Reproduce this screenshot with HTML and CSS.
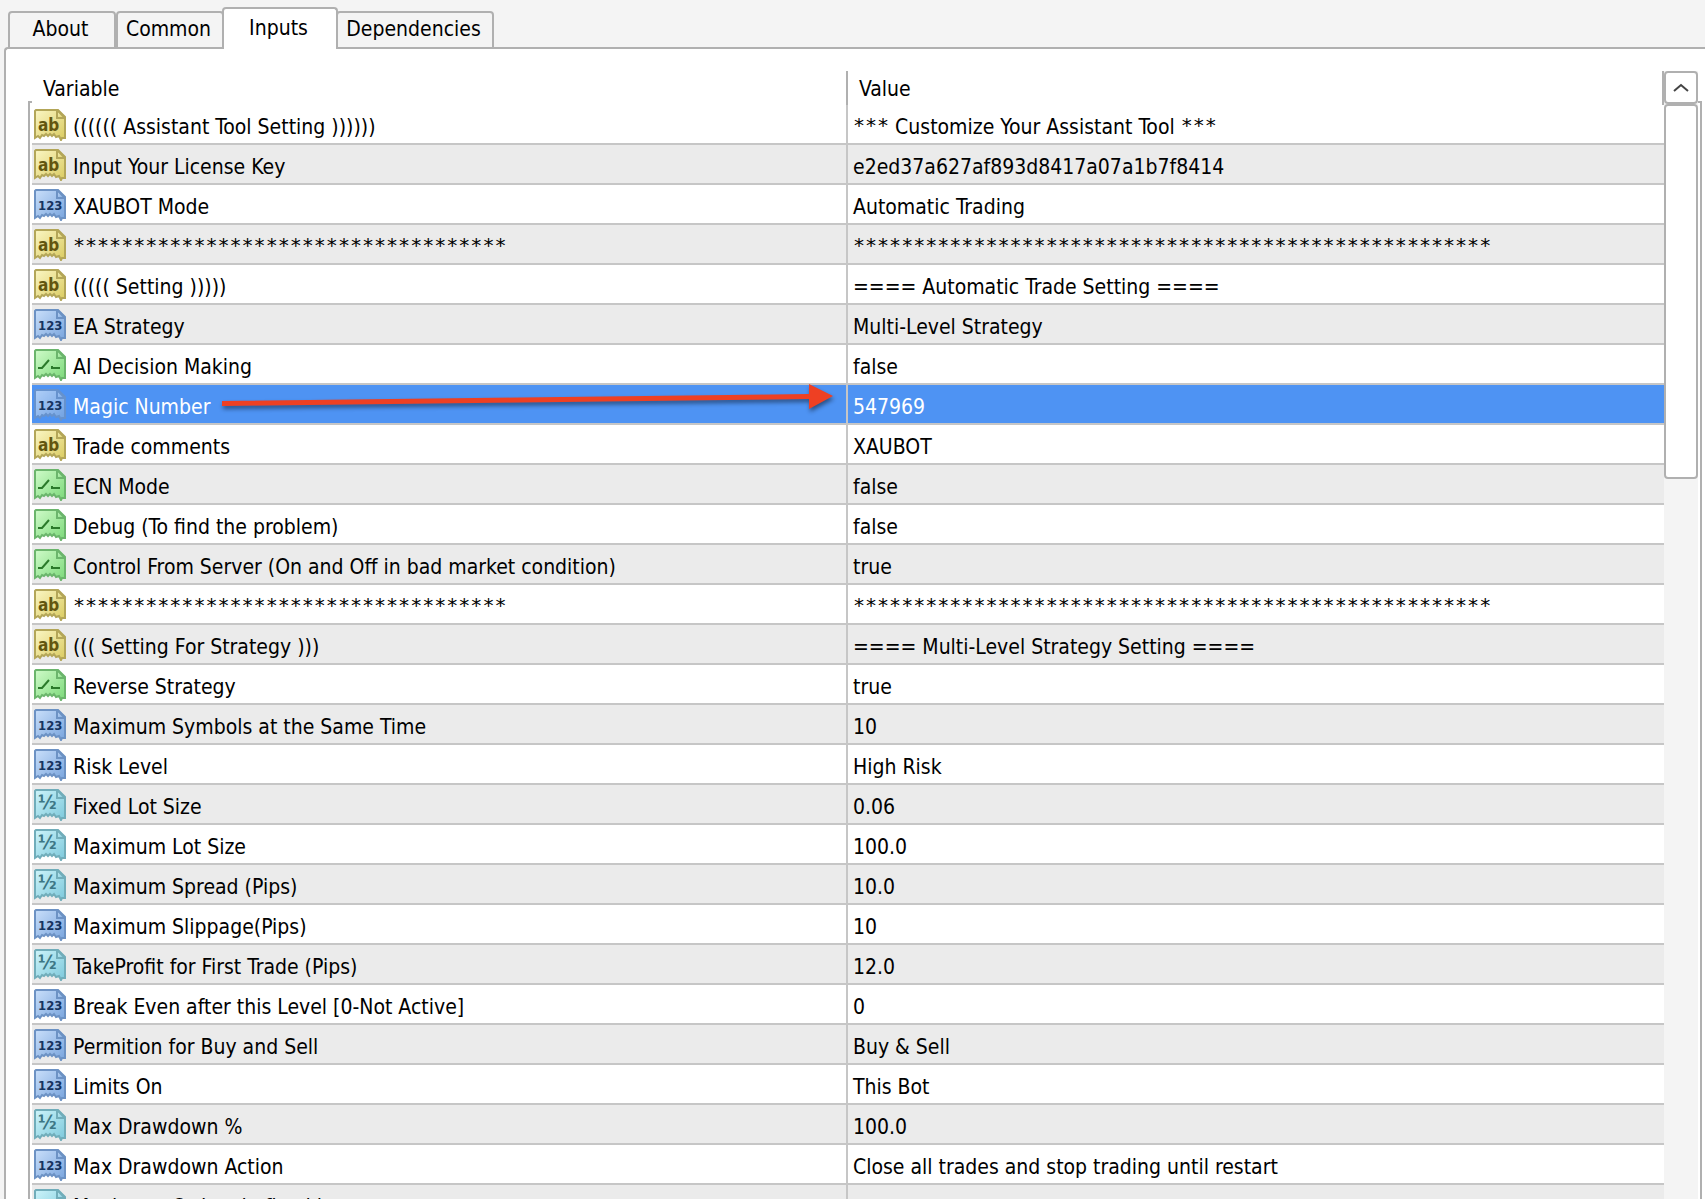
FILE: index.html
```
<!DOCTYPE html>
<html lang="en">
<head>
<meta charset="utf-8">
<title>Expert inputs</title>
<link rel="stylesheet" href="styles.css">
</head>
<body>
<svg class="sprite" aria-hidden="true">
  <defs>
    <linearGradient id="g-string" x1="0" y1="0" x2="1" y2="1"><stop offset="0" stop-color="#fbf6c4"/><stop offset="1" stop-color="#dacb60"/></linearGradient>
    <linearGradient id="g-int" x1="0" y1="0" x2="1" y2="1"><stop offset="0" stop-color="#c9dffa"/><stop offset="1" stop-color="#78a4dd"/></linearGradient>
    <linearGradient id="g-bool" x1="0" y1="0" x2="1" y2="1"><stop offset="0" stop-color="#cffbc9"/><stop offset="1" stop-color="#7cd97a"/></linearGradient>
    <linearGradient id="g-real" x1="0" y1="0" x2="1" y2="1"><stop offset="0" stop-color="#cdf4fa"/><stop offset="1" stop-color="#7cc8db"/></linearGradient>
    <path id="page" d="M2 1H24L31 8V29L28 29L27 31L25 27L22 28L20 25L18 27L16 25L14 27L12 25L10 27L8 26L6 29L4 27L1 29V2Z"/>
    <path id="fold" d="M23 1V9H31Z"/>
  </defs>
  <symbol id="i-string" viewBox="0 0 32 32">
    <g fill="url(#g-string)" stroke="#b3a658" stroke-width="2"><use href="#page"/><use href="#fold"/></g>
  </symbol>
  <symbol id="i-int" viewBox="0 0 32 32">
    <g fill="url(#g-int)" stroke="#6c92c4" stroke-width="2"><use href="#page"/><use href="#fold"/></g>
  </symbol>
  <symbol id="i-bool" viewBox="0 0 32 32">
    <g fill="url(#g-bool)" stroke="#6bb56c" stroke-width="2"><use href="#page"/><use href="#fold"/></g>
    <path d="M4 19H8L15 11M18 17V19H26" fill="none" stroke="#2b7a2b" stroke-width="2"/>
  </symbol>
  <symbol id="i-real" viewBox="0 0 32 32">
    <g fill="url(#g-real)" stroke="#71adba" stroke-width="2"><use href="#page"/><use href="#fold"/></g>
  </symbol>
</svg>

<div class="tabs" role="tablist">
  <button class="tab" role="tab">About</button>
  <button class="tab" role="tab">Common</button>
  <button class="tab tab-active" role="tab" aria-selected="true">Inputs</button>
  <button class="tab tab-wide" role="tab">Dependencies</button>
</div>

<main class="panel">
  <div class="list">
    <table class="inputs">
      <thead>
        <tr><th scope="col">Variable</th><th scope="col">Value</th></tr>
      </thead>
      <tbody>
        <tr><td><div class="name"><span class="icon string"><svg><use href="#i-string"/></svg><b>ab</b></span>(((((( Assistant Tool Setting ))))))</div></td><td><span class="stars">***</span> Customize Your Assistant Tool <span class="stars">***</span></td></tr>
        <tr><td><div class="name"><span class="icon string"><svg><use href="#i-string"/></svg><b>ab</b></span>Input Your License Key</div></td><td>e2ed37a627af893d8417a07a1b7f8414</td></tr>
        <tr><td><div class="name"><span class="icon int"><svg><use href="#i-int"/></svg><b>123</b></span>XAUBOT Mode</div></td><td>Automatic Trading</td></tr>
        <tr><td><div class="name"><span class="icon string"><svg><use href="#i-string"/></svg><b>ab</b></span><span class="stars">************************************</span></div></td><td><span class="stars">*****************************************************</span></td></tr>
        <tr><td><div class="name"><span class="icon string"><svg><use href="#i-string"/></svg><b>ab</b></span>((((( Setting )))))</div></td><td>==== Automatic Trade Setting ====</td></tr>
        <tr><td><div class="name"><span class="icon int"><svg><use href="#i-int"/></svg><b>123</b></span>EA Strategy</div></td><td>Multi-Level Strategy</td></tr>
        <tr><td><div class="name"><span class="icon"><svg><use href="#i-bool"/></svg></span>AI Decision Making</div></td><td>false</td></tr>
        <tr class="selected"><td><div class="name"><span class="icon int"><svg><use href="#i-int"/></svg><b>123</b></span>Magic Number</div><svg class="arrow" viewBox="0 0 612 30" aria-hidden="true"><path d="M0 16L587 9V-1L611 11L587 24V14L0 21Z"/></svg></td><td>547969</td></tr>
        <tr><td><div class="name"><span class="icon string"><svg><use href="#i-string"/></svg><b>ab</b></span>Trade comments</div></td><td>XAUBOT</td></tr>
        <tr><td><div class="name"><span class="icon"><svg><use href="#i-bool"/></svg></span>ECN Mode</div></td><td>false</td></tr>
        <tr><td><div class="name"><span class="icon"><svg><use href="#i-bool"/></svg></span>Debug (To find the problem)</div></td><td>false</td></tr>
        <tr><td><div class="name"><span class="icon"><svg><use href="#i-bool"/></svg></span>Control From Server (On and Off in bad market condition)</div></td><td>true</td></tr>
        <tr><td><div class="name"><span class="icon string"><svg><use href="#i-string"/></svg><b>ab</b></span><span class="stars">************************************</span></div></td><td><span class="stars">*****************************************************</span></td></tr>
        <tr><td><div class="name"><span class="icon string"><svg><use href="#i-string"/></svg><b>ab</b></span>((( Setting For Strategy )))</div></td><td>==== Multi-Level Strategy Setting ====</td></tr>
        <tr><td><div class="name"><span class="icon"><svg><use href="#i-bool"/></svg></span>Reverse Strategy</div></td><td>true</td></tr>
        <tr><td><div class="name"><span class="icon int"><svg><use href="#i-int"/></svg><b>123</b></span>Maximum Symbols at the Same Time</div></td><td>10</td></tr>
        <tr><td><div class="name"><span class="icon int"><svg><use href="#i-int"/></svg><b>123</b></span>Risk Level</div></td><td>High Risk</td></tr>
        <tr><td><div class="name"><span class="icon real"><svg><use href="#i-real"/></svg><b>½</b></span>Fixed Lot Size</div></td><td>0.06</td></tr>
        <tr><td><div class="name"><span class="icon real"><svg><use href="#i-real"/></svg><b>½</b></span>Maximum Lot Size</div></td><td>100.0</td></tr>
        <tr><td><div class="name"><span class="icon real"><svg><use href="#i-real"/></svg><b>½</b></span>Maximum Spread (Pips)</div></td><td>10.0</td></tr>
        <tr><td><div class="name"><span class="icon int"><svg><use href="#i-int"/></svg><b>123</b></span>Maximum Slippage(Pips)</div></td><td>10</td></tr>
        <tr><td><div class="name"><span class="icon real"><svg><use href="#i-real"/></svg><b>½</b></span>TakeProfit for First Trade (Pips)</div></td><td>12.0</td></tr>
        <tr><td><div class="name"><span class="icon int"><svg><use href="#i-int"/></svg><b>123</b></span>Break Even after this Level [0-Not Active]</div></td><td>0</td></tr>
        <tr><td><div class="name"><span class="icon int"><svg><use href="#i-int"/></svg><b>123</b></span>Permition for Buy and Sell</div></td><td>Buy &amp; Sell</td></tr>
        <tr><td><div class="name"><span class="icon int"><svg><use href="#i-int"/></svg><b>123</b></span>Limits On</div></td><td>This Bot</td></tr>
        <tr><td><div class="name"><span class="icon real"><svg><use href="#i-real"/></svg><b>½</b></span>Max Drawdown %</div></td><td>100.0</td></tr>
        <tr><td><div class="name"><span class="icon int"><svg><use href="#i-int"/></svg><b>123</b></span>Max Drawdown Action</div></td><td>Close all trades and stop trading until restart</td></tr>
        <tr><td><div class="name"><span class="icon real"><svg><use href="#i-real"/></svg></span>Maximum Orders in fixed lots</div></td><td></td></tr>
      </tbody>
    </table>
    <div class="scrollbar">
      <button class="scroll-up" aria-label="Scroll up"><svg viewBox="0 0 18 10"><path d="M2 8L9 2L16 8"/></svg></button>
      <div class="thumb"></div>
    </div>
  </div>
</main>
</body>
</html>
```
FILE: styles.css
```
* { box-sizing: border-box; }

body {
  display: flex;
  flex-direction: column;
  height: 100vh;
  margin: 0;
  overflow: hidden;
  background: #f4f4f4;
  color: #000;
  font: 21px/32px "DejaVu Sans Condensed", "DejaVu Sans", sans-serif;
}

button {
  padding: 0;
  color: inherit;
  font: inherit;
}

.sprite {
  position: absolute;
  width: 0;
  height: 0;
}

/* Tabs */
.tabs {
  display: flex;
  flex: none;
  align-items: flex-end;
  padding: 7px 0 0 8px;
}

.tab {
  width: 108px;
  height: 38px;
  margin-bottom: -2px;
  padding: 0 3px 2px 0;
  border: 2px solid #b0b0b0;
  border-radius: 4px 4px 0 0;
  background: #f4f4f4;
}

.tab-active {
  z-index: 1;
  width: 116px;
  height: 42px;
  margin-left: -2px;
  border-bottom: 0;
  background: #fff;
}

.tab-wide {
  width: 158px;
  margin-left: -2px;
}

/* Panel */
.panel {
  flex: 1;
  min-height: 0;
  margin-left: 4px;
  padding: 22px 3px 0 22px;
  border: 2px solid #b0b0b0;
  border-width: 2px 0 0 2px;
  border-radius: 4px 0 0 0;
  background: #fff;
}

.list {
  position: relative;
  display: grid;
  grid-template-columns: 1fr 34px;
  padding: 0 4px;
}

/* Frame line that runs behind the header row */
.list::before {
  content: "";
  position: absolute;
  inset: 30px 0 0;
  border: 2px solid #b0b0b0;
}

.inputs {
  position: relative;
  width: 100%;
  border-collapse: separate;
  border-spacing: 0;
  table-layout: fixed;
  background: #fff;
}

.inputs th {
  height: 34px;
  padding: 2px 11px 0;
  border-right: 2px solid #b0b0b0;
  font-weight: normal;
  text-align: left;
}

.inputs td {
  height: 40px;
  padding: 6px 0 0 5px;
  border-bottom: 2px solid #c6c6c6;
  white-space: nowrap;
}

.inputs td:first-child {
  position: relative;
  padding-left: 2px;
  border-right: 2px solid #c6c6c6;
}

.inputs tbody tr:nth-child(even) {
  background: #ebebeb;
}

.inputs tbody tr.selected {
  background: #4e93f3;
  color: #fff;
}

.name {
  display: flex;
  gap: 7px;
  height: 32px;
}

/* Type icon: torn page with its caption stacked on it */
.icon {
  display: grid;
  flex: none;
  grid-template: 32px / 32px;
  margin-top: -2px;
}

.icon > * {
  grid-area: 1 / 1;
}

.icon svg {
  width: 32px;
  height: 32px;
}

.icon b {
  z-index: 1;
  padding-left: 4px;
  font-size: 13px;
}

.string b {
  color: #62560f;
  font-size: 17px;
  line-height: 32px;
}

.int b {
  color: #153461;
  line-height: 34px;
}

.real b {
  color: #3c7785;
  font-size: 20px;
  line-height: 26px;
}

.selected .icon svg {
  opacity: 0.8;
}

.stars {
  font: 20px/28px "DejaVu Sans Mono", monospace;
  vertical-align: 2px;
}

.arrow {
  position: absolute;
  top: 0;
  left: 190px;
  width: 612px;
  height: 30px;
  overflow: visible;
  fill: #ee4023;
  filter: drop-shadow(1px 3px 2px rgba(0, 0, 0, 0.45));
}

/* Scrollbar */
.scrollbar {
  position: relative;
  background: #f4f4f4;
}

.scroll-up {
  display: grid;
  place-items: center;
  width: 34px;
  height: 33px;
  border: 2px solid #b0b0b0;
  border-radius: 4px;
  background: #fff;
}

.scroll-up svg {
  width: 18px;
  height: 10px;
  fill: none;
  stroke: #444;
  stroke-width: 2;
}

.thumb {
  height: 375px;
  border: 2px solid #b0b0b0;
  border-radius: 4px;
  background: #fff;
}
```
